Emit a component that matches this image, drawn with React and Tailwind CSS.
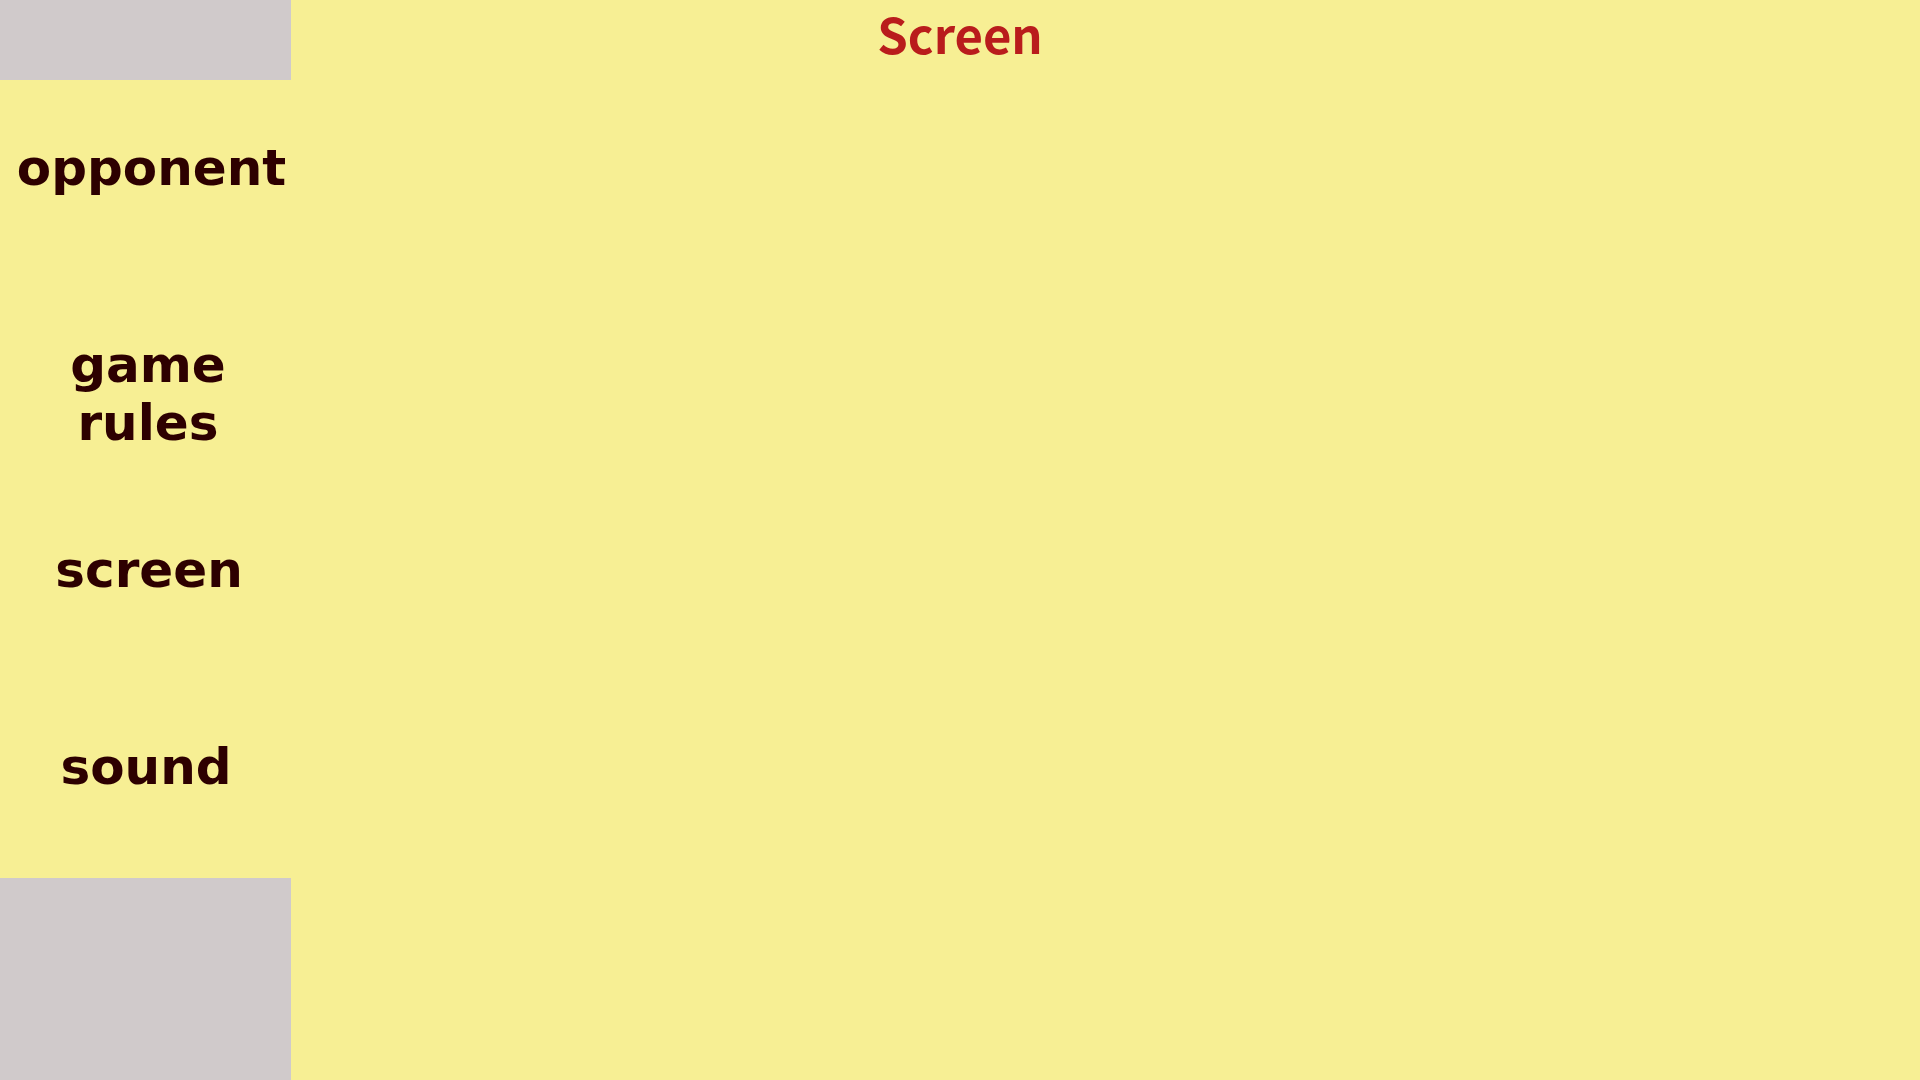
import React from 'react';

const menuItems = [
  { id: 'opponent', label: 'opponent', pad: 'pl-[12px] pt-[59px]' },
  { id: 'rules', label: 'game rules', pad: 'pl-[5px] pt-[57px]' },
  { id: 'screen', label: 'screen', pad: 'pl-[7px] pt-[64px]' },
  { id: 'sound', label: 'sound', pad: 'pl-[1px] pt-[57px]' },
];

const App = () => {
  return (
    <div className="w-[1920px] h-[1080px] flex flex-col bg-[#f7ef94] overflow-hidden">
      <div className="flex h-[80px] shrink-0">
        <div className="w-[291px] bg-[#d0cacb]" />
        <h1
          className="flex-1 pt-[3px] text-center text-[49px] font-bold leading-[60px] text-[#b91c1c]"
          style={{ fontFamily: '"Noto Sans CJK SC", sans-serif' }}
        >
          Screen
        </h1>
        <div className="w-[291px]" />
      </div>

      <div className="flex-1 flex">
        <nav
          className="w-[291px] flex flex-col text-[#2d0000]"
          style={{ fontFamily: '"DejaVu Sans", sans-serif' }}
        >
          {menuItems.map((item) => (
            <div
              key={item.id}
              className={`flex-1 flex justify-center text-[50px] font-bold leading-[58px] text-center ${item.pad}`}
            >
              <span className={item.id === 'rules' ? 'w-[200px]' : ''}>{item.label}</span>
            </div>
          ))}
        </nav>
        <main className="flex-1" />
      </div>

      <div className="flex h-[202px] shrink-0">
        <div className="w-[291px] bg-[#d0cacb]" />
      </div>
    </div>
  );
};

export default App;
